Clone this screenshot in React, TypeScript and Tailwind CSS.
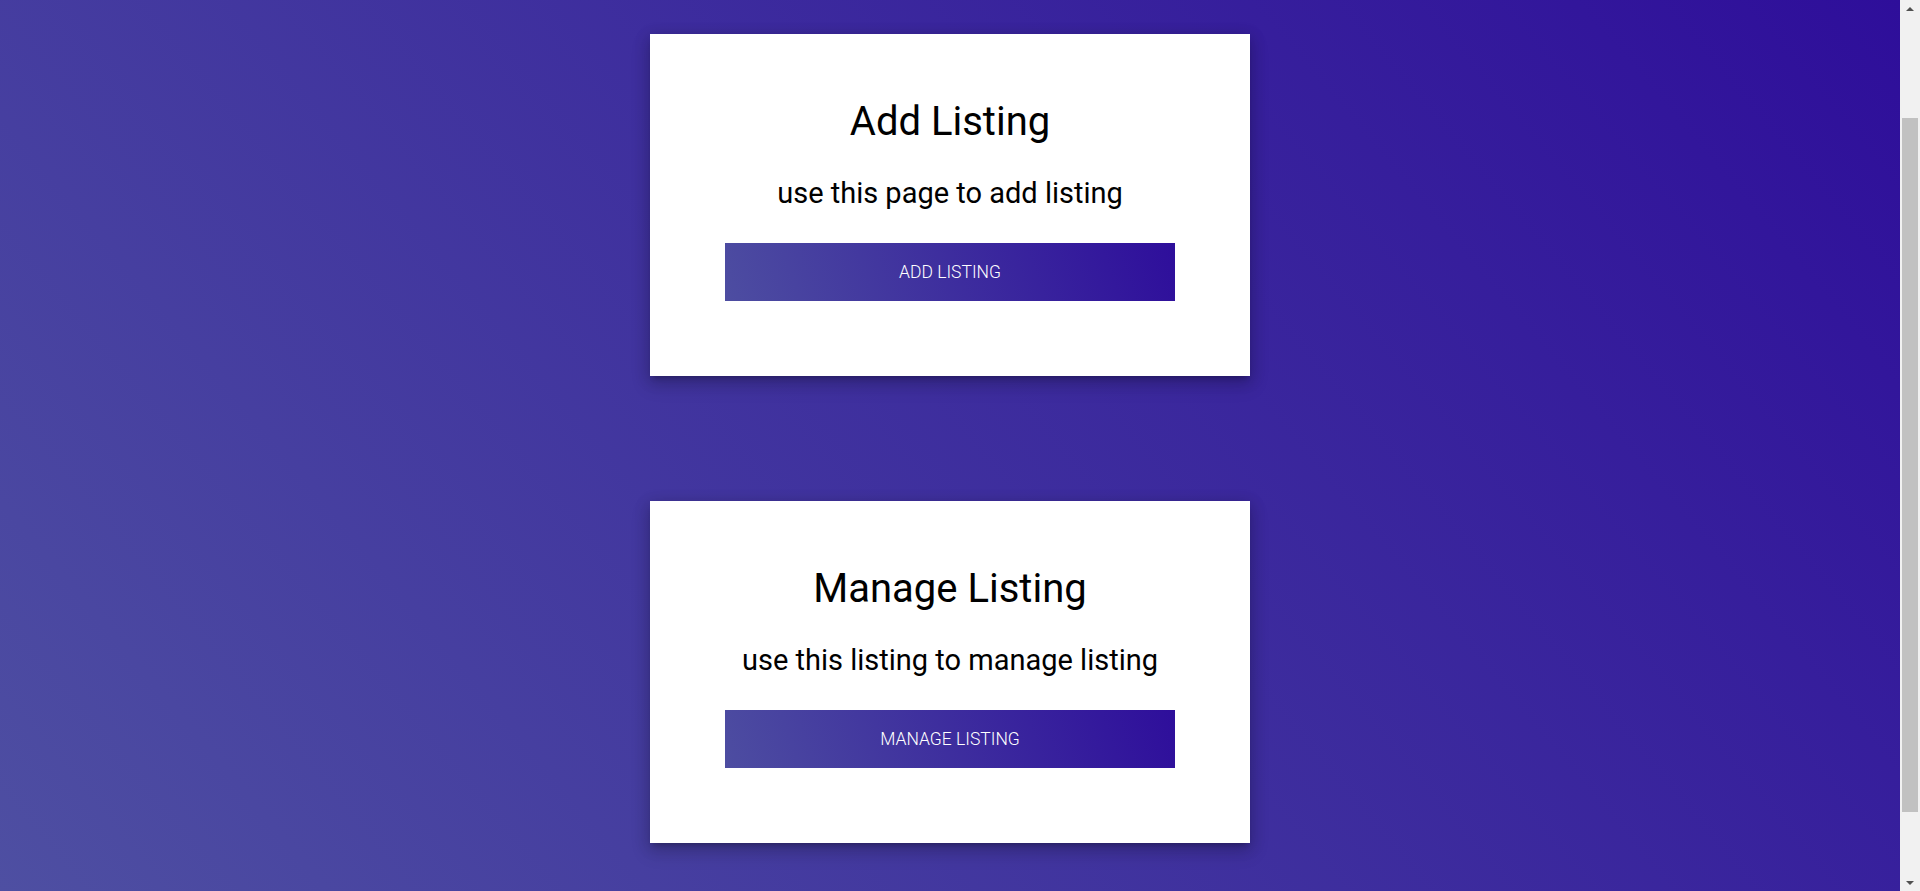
type CardProps = {
  title: string;
  text: string;
  button: string;
};

function ListingCard({ title, text, button }: CardProps) {
  return (
    <div className="w-[600px] h-[342px] shrink-0 bg-white flex flex-col items-center shadow-[0_8px_17px_2px_rgba(0,0,0,0.14),0_3px_14px_2px_rgba(0,0,0,0.12),0_5px_5px_-3px_rgba(0,0,0,0.2)]">
      <h4 className="mt-[64px] text-[40px] leading-[48px] font-normal text-black">{title}</h4>
      <h5 className="mt-[31px] text-[29px] leading-[32px] font-normal text-black">{text}</h5>
      <button className="mt-[34px] w-[450px] h-[58px] text-white text-[17.5px] font-light uppercase bg-[linear-gradient(70deg,#4d4da1,#2e0e9b)]">
        {button}
      </button>
    </div>
  );
}

function ScrollBar() {
  return (
    <div className="w-[20px] h-screen bg-[#f1f1f1] flex flex-col items-center">
      <div className="h-[17px] w-full flex items-center justify-center">
        <div className="w-0 h-0 border-l-[4px] border-r-[4px] border-b-[4px] border-l-transparent border-r-transparent border-b-[#505050]" />
      </div>
      <div className="flex-1 w-full px-[2px] flex flex-col">
        <div className="h-[101px]" />
        <div className="h-[694px] bg-[#c1c1c1]" />
      </div>
      <div className="h-[17px] w-full flex items-center justify-center">
        <div className="w-0 h-0 border-l-[4px] border-r-[4px] border-t-[4px] border-l-transparent border-r-transparent border-t-[#505050]" />
      </div>
    </div>
  );
}

export default function App() {
  return (
    <div className="h-screen flex overflow-hidden font-['Roboto',sans-serif]">
      <div className="flex-1 h-screen overflow-hidden bg-[linear-gradient(50deg,#4e4fa2,#2e0e9a)] pt-[34px] flex flex-col items-center gap-[125px]">
        <ListingCard title="Add Listing" text="use this page to add listing" button="Add Listing" />
        <ListingCard title="Manage Listing" text="use this listing to manage listing" button="Manage Listing" />
      </div>
      <ScrollBar />
    </div>
  );
}
